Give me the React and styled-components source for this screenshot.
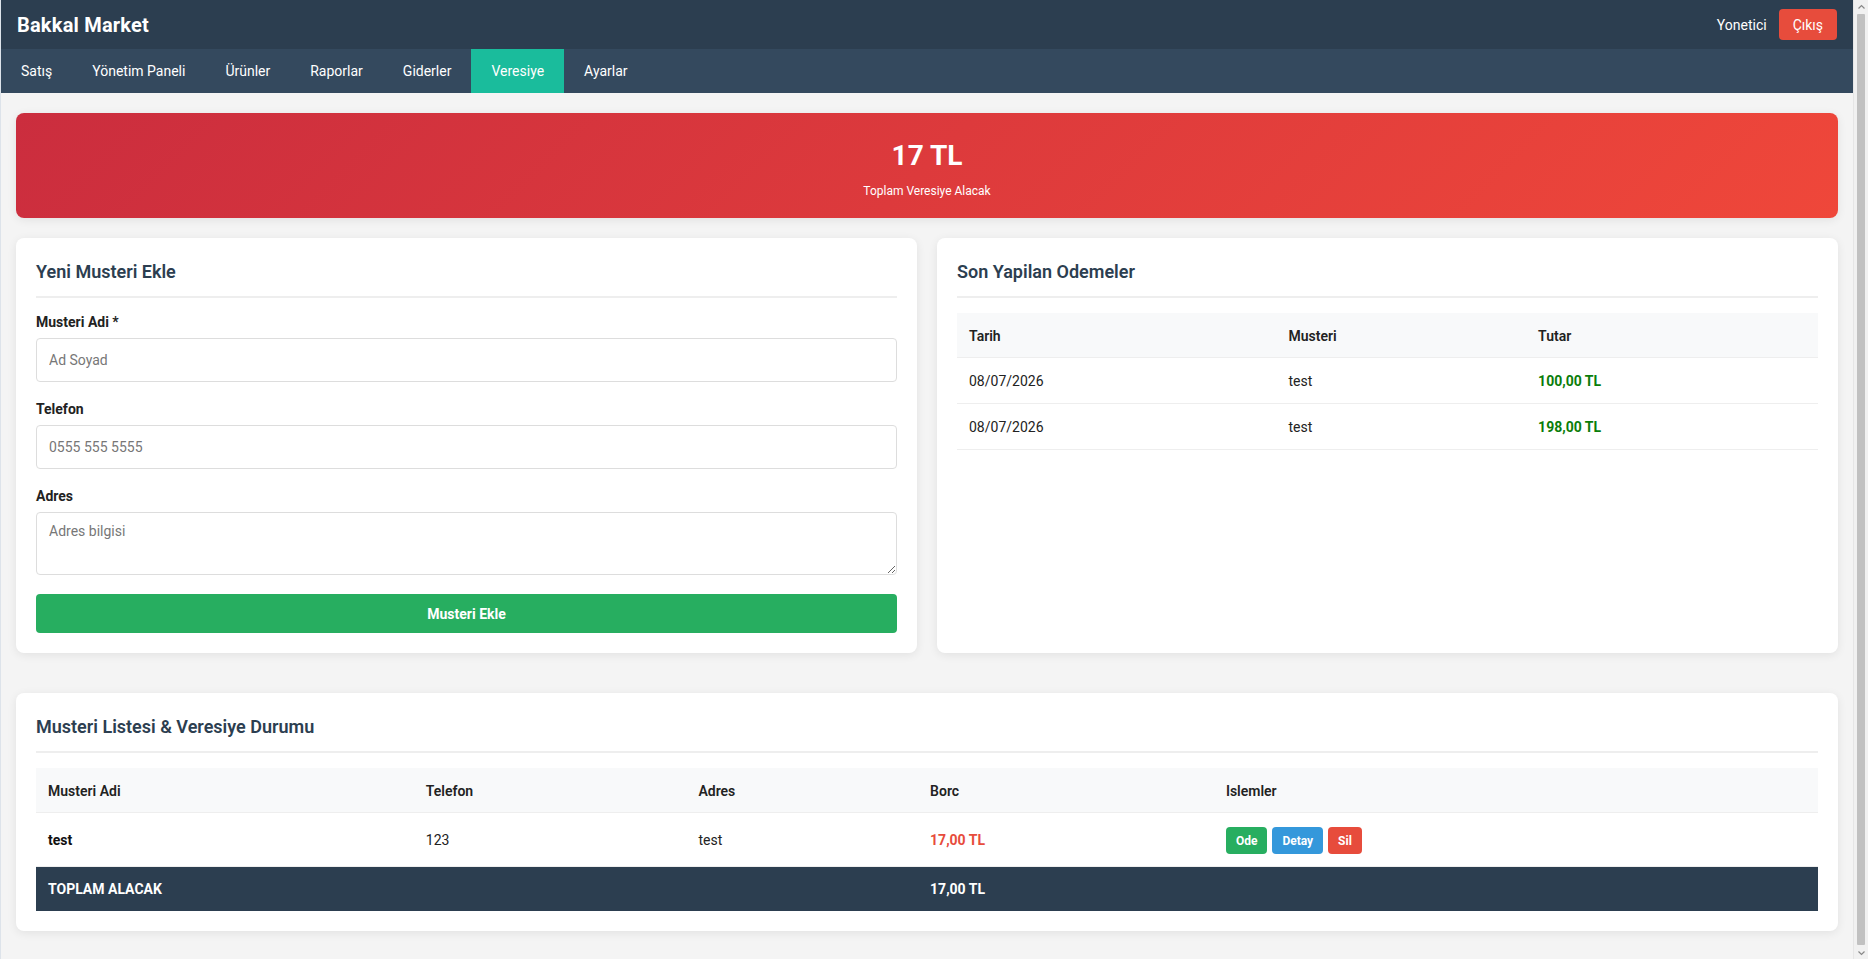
import React from "react";
import styled, { createGlobalStyle } from "styled-components";

const GlobalStyle = createGlobalStyle`
  * {
    box-sizing: border-box;
  }

  body {
    margin: 0;
    background: #f4f4f4;
    font-family: "Segoe UI", Roboto, "Noto Sans", sans-serif;
    font-size: 14px;
    color: #333;
  }
`;

const StyledWindow = styled.div`
  display: flex;
  height: 100vh;
  overflow: hidden;
`;

const StyledPage = styled.div`
  flex: 1;
  min-width: 0;
  border-left: 1px solid #dde3ea;
`;

const StyledScrollbar = styled.div`
  display: flex;
  flex-direction: column;
  align-items: center;
  width: 15px;
  background: #f1f1f1;
  border-left: 1px solid #e6e6e6;
`;

const StyledScrollArrow = styled.div`
  display: flex;
  align-items: center;
  justify-content: center;
  height: 12px;
  color: #888;
`;

const StyledScrollThumb = styled.div`
  flex: 1;
  width: 8px;
  margin: 2px 0;
  background: #c1c1c1;
  border-radius: 1px;
`;

const StyledTopBar = styled.header`
  display: flex;
  align-items: center;
  justify-content: space-between;
  height: 49px;
  padding: 0 16px 0 16px;
  background: #2c3e50;
  color: #fff;
`;

const StyledBrand = styled.h1`
  margin: 0;
  font-size: 20px;
  font-weight: 700;
  letter-spacing: 0.2px;
`;

const StyledUserMenu = styled.div`
  display: flex;
  align-items: center;
  gap: 12px;
  font-size: 14px;
`;

const StyledLogout = styled.button`
  height: 31px;
  padding: 0 14px;
  border: none;
  border-radius: 4px;
  background: #e74c3c;
  color: #fff;
  font-family: inherit;
  font-size: 14px;
  cursor: pointer;
`;

const StyledNav = styled.nav`
  display: flex;
  height: 44px;
  background: #34495e;
`;

const StyledNavItem = styled.a`
  display: flex;
  align-items: center;
  padding: 0 20px;
  color: #fff;
  font-size: 14px;
  text-decoration: none;
  background: ${(props) => (props.active ? "#1abc9c" : "transparent")};
`;

const StyledMain = styled.main`
  padding: 20px 15px 40px;
`;

const StyledSummary = styled.div`
  height: 105px;
  padding: 26px 20px 18px;
  border-radius: 8px;
  background: linear-gradient(135deg, #cb2d3e 0%, #ef473a 100%);
  color: #fff;
  text-align: center;
  box-shadow: 0 2px 10px rgba(0, 0, 0, 0.08);
`;

const StyledSummaryValue = styled.h2`
  margin: 0 0 10px;
  font-size: 28px;
  font-weight: 700;
  line-height: 1.2;
`;

const StyledSummaryLabel = styled.p`
  margin: 0;
  font-size: 12px;
  line-height: 1.4;
`;

const StyledGrid = styled.div`
  display: grid;
  grid-template-columns: 1fr 1fr;
  gap: 20px;
  margin: 20px 0 40px;
`;

const StyledCard = styled.section`
  padding: 22px 20px 20px;
  border-radius: 8px;
  background: #fff;
  box-shadow: 0 2px 10px rgba(0, 0, 0, 0.08);
`;

const StyledCardTitle = styled.h3`
  margin: 0 0 15px;
  padding-bottom: 12px;
  border-bottom: 2px solid #eee;
  color: #2c3e50;
  font-size: 18px;
  font-weight: 600;
  line-height: 24px;
`;

const StyledField = styled.div`
  margin-bottom: 18px;
`;

const StyledLabel = styled.label`
  display: block;
  margin: 0 0 6px;
  font-size: 14px;
  font-weight: 700;
  line-height: 19px;
  color: #222;
`;

const StyledInput = styled.input`
  display: block;
  width: 100%;
  height: 44px;
  padding: 0 12px;
  border: 1px solid #ddd;
  border-radius: 4px;
  font-family: inherit;
  font-size: 14px;
  color: #333;

  &::placeholder {
    color: #777;
  }
`;

const StyledTextarea = styled.textarea`
  display: block;
  width: 100%;
  height: 63px;
  padding: 10px 12px;
  border: 1px solid #ddd;
  border-radius: 4px;
  font-family: inherit;
  font-size: 14px;
  resize: vertical;

  &::placeholder {
    color: #777;
  }
`;

const StyledSubmit = styled.button`
  display: block;
  width: 100%;
  height: 39px;
  margin-top: 19px;
  border: none;
  border-radius: 4px;
  background: #27ae60;
  color: #fff;
  font-family: inherit;
  font-size: 14px;
  font-weight: 700;
  cursor: pointer;
`;

const StyledTable = styled.table`
  width: 100%;
  border-collapse: collapse;
  font-size: 14px;
`;

const StyledTh = styled.th`
  padding: 13px 12px 11px;
  border-bottom: 1px solid #eee;
  background: #f8f9fa;
  color: #222;
  font-weight: 600;
  line-height: 20px;
  text-align: left;
  width: ${(props) => props.width || "auto"};
`;

const StyledTd = styled.td`
  padding: ${(props) => (props.tight ? "14px 12px 12px" : "13px 12px 11px")};
  border-bottom: 1px solid #eee;
  line-height: 21px;
  color: ${(props) => props.color || "#222"};
  font-weight: ${(props) => (props.bold ? 700 : 400)};
  vertical-align: middle;
`;

const StyledTotalRow = styled.tr`
  background: #2c3e50;
  color: #fff;

  td {
    padding: 12px;
    font-weight: 700;
    line-height: 20px;
  }
`;

const StyledActions = styled.div`
  display: flex;
  gap: 5px;
`;

const StyledSmallButton = styled.button`
  height: 27px;
  padding: 0 10px;
  border: none;
  border-radius: 4px;
  background: ${(props) => props.bg};
  color: #fff;
  font-family: inherit;
  font-size: 12px;
  font-weight: 700;
  cursor: pointer;
`;

const navItems = [
  "Satış",
  "Yönetim Paneli",
  "Ürünler",
  "Raporlar",
  "Giderler",
  "Veresiye",
  "Ayarlar",
];

const payments = [
  { date: "08/07/2026", customer: "test", amount: "100,00 TL" },
  { date: "08/07/2026", customer: "test", amount: "198,00 TL" },
];

const Chevron = ({ up }) => (
  <svg width="7" height="5" viewBox="0 0 7 5">
    <path
      d={up ? "M0.5 4.5 L3.5 1.5 L6.5 4.5" : "M0.5 0.5 L3.5 3.5 L6.5 0.5"}
      fill="none"
      stroke="currentColor"
      strokeWidth="1.2"
    />
  </svg>
);

const App = () => {
  return (
    <StyledWindow>
      <GlobalStyle />
      <StyledPage>
        <StyledTopBar>
          <StyledBrand>Bakkal Market</StyledBrand>
          <StyledUserMenu>
            <span>Yonetici</span>
            <StyledLogout>Çıkış</StyledLogout>
          </StyledUserMenu>
        </StyledTopBar>

        <StyledNav>
          {navItems.map((item) => (
            <StyledNavItem key={item} active={item === "Veresiye"}>
              {item}
            </StyledNavItem>
          ))}
        </StyledNav>

        <StyledMain>
          <StyledSummary>
            <StyledSummaryValue>17 TL</StyledSummaryValue>
            <StyledSummaryLabel>Toplam Veresiye Alacak</StyledSummaryLabel>
          </StyledSummary>

          <StyledGrid>
            <StyledCard>
              <StyledCardTitle>Yeni Musteri Ekle</StyledCardTitle>
              <StyledField>
                <StyledLabel>Musteri Adi *</StyledLabel>
                <StyledInput placeholder="Ad Soyad" />
              </StyledField>
              <StyledField>
                <StyledLabel>Telefon</StyledLabel>
                <StyledInput placeholder="0555 555 5555" />
              </StyledField>
              <div>
                <StyledLabel>Adres</StyledLabel>
                <StyledTextarea placeholder="Adres bilgisi" />
              </div>
              <StyledSubmit>Musteri Ekle</StyledSubmit>
            </StyledCard>

            <StyledCard>
              <StyledCardTitle>Son Yapilan Odemeler</StyledCardTitle>
              <StyledTable>
                <thead>
                  <tr>
                    <StyledTh width="37.1%">Tarih</StyledTh>
                    <StyledTh width="29%">Musteri</StyledTh>
                    <StyledTh>Tutar</StyledTh>
                  </tr>
                </thead>
                <tbody>
                  {payments.map((p, i) => (
                    <tr key={i}>
                      <StyledTd>{p.date}</StyledTd>
                      <StyledTd>{p.customer}</StyledTd>
                      <StyledTd bold color="#0a7d0a">
                        {p.amount}
                      </StyledTd>
                    </tr>
                  ))}
                </tbody>
              </StyledTable>
            </StyledCard>
          </StyledGrid>

          <StyledCard>
            <StyledCardTitle>Musteri Listesi &amp; Veresiye Durumu</StyledCardTitle>
            <StyledTable>
              <thead>
                <tr>
                  <StyledTh width="21.2%">Musteri Adi</StyledTh>
                  <StyledTh width="15.3%">Telefon</StyledTh>
                  <StyledTh width="13%">Adres</StyledTh>
                  <StyledTh width="16.6%">Borc</StyledTh>
                  <StyledTh>Islemler</StyledTh>
                </tr>
              </thead>
              <tbody>
                <tr>
                  <StyledTd tight bold color="#111">
                    test
                  </StyledTd>
                  <StyledTd tight>123</StyledTd>
                  <StyledTd tight>test</StyledTd>
                  <StyledTd tight bold color="#e74c3c">
                    17,00 TL
                  </StyledTd>
                  <StyledTd tight>
                    <StyledActions>
                      <StyledSmallButton bg="#27ae60">Ode</StyledSmallButton>
                      <StyledSmallButton bg="#3498db">Detay</StyledSmallButton>
                      <StyledSmallButton bg="#e74c3c">Sil</StyledSmallButton>
                    </StyledActions>
                  </StyledTd>
                </tr>
                <StyledTotalRow>
                  <td>TOPLAM ALACAK</td>
                  <td />
                  <td />
                  <td>17,00 TL</td>
                  <td />
                </StyledTotalRow>
              </tbody>
            </StyledTable>
          </StyledCard>
        </StyledMain>
      </StyledPage>

      <StyledScrollbar>
        <StyledScrollArrow>
          <Chevron up />
        </StyledScrollArrow>
        <StyledScrollThumb />
        <StyledScrollArrow>
          <Chevron />
        </StyledScrollArrow>
      </StyledScrollbar>
    </StyledWindow>
  );
};

export default App;
